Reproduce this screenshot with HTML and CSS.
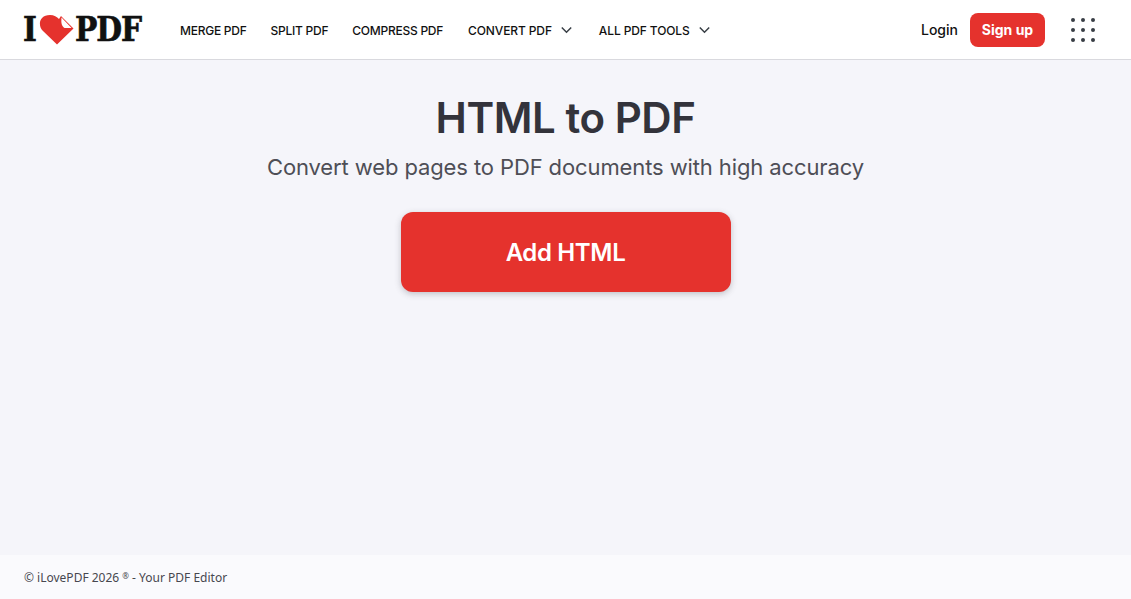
FILE: index.html
```html
<!DOCTYPE html>
<html lang="en">
<head>
  <meta charset="UTF-8">
  <meta name="viewport" content="width=device-width, initial-scale=1.0">
  <title>HTML to PDF</title>
  <link rel="stylesheet" href="styles.css">
</head>
<body>
  <header class="top_bar">
    <a class="logo" href="#">
      <span class="logo_txt logo_i">I</span>
      <svg class="logo_heart" width="36" height="32" viewBox="0 0 36 32">
        <path d="M18 30.500 L4 17 C-1.500 11.500 0 1 11 1 C15 1 18 3 20 5 L22 2 L34.500 14.500 Z" fill="#e5322d"/>
        <path d="M22.500 3.500 L32.500 14 L25.500 14 C22.500 12 22 9 22.500 3.500 Z" fill="#fff"/>
      </svg>
      <span class="logo_txt">PDF</span>
    </a>
    <nav class="main_nav">
      <a href="#">MERGE PDF</a>
      <a href="#">SPLIT PDF</a>
      <a href="#">COMPRESS PDF</a>
      <a href="#" class="has_drop">CONVERT PDF
        <svg width="11" height="8" viewBox="0 0 11 8"><path d="M0.800 1.500 L5.500 6.200 L10.200 1.500" fill="none" stroke="#383e45" stroke-width="1.500"/></svg>
      </a>
      <a href="#" class="has_drop">ALL PDF TOOLS
        <svg width="11" height="8" viewBox="0 0 11 8"><path d="M0.800 1.500 L5.500 6.200 L10.200 1.500" fill="none" stroke="#383e45" stroke-width="1.500"/></svg>
      </a>
    </nav>
    <div class="user_box">
      <a class="login" href="#">Login</a>
      <a class="signup" href="#">Sign up</a>
      <div class="apps_grid">
        <i></i><i></i><i></i><i></i><i></i><i></i><i></i><i></i><i></i>
      </div>
    </div>
  </header>

  <main class="tool_area">
    <h1>HTML to PDF</h1>
    <h2>Convert web pages to PDF documents with high accuracy</h2>
    <a class="add_btn" href="#">Add HTML</a>
  </main>

  <footer class="foot_bar">© iLovePDF 2026 <span class="reg">®</span> - Your PDF Editor</footer>
</body>
</html>
```

FILE: styles.css
```css
* {
  box-sizing: border-box;
}

html, body {
  height: 100%;
}

body {
  margin: 0;
  display: flex;
  flex-direction: column;
  font-family: Inter, 'Liberation Sans', sans-serif;
  background-color: #f5f5fa;
  color: #33333b;
  overflow: hidden;
}

a {
  text-decoration: none;
  color: inherit;
}

.top_bar {
  display: flex;
  align-items: center;
  height: 60px;
  padding: 0 36px 0 24px;
  background-color: #fff;
  border-bottom: 1px solid #d9d9de;
}

.logo {
  display: flex;
  align-items: center;
  width: 120px;
  margin-right: 36px;
}

.logo_txt {
  font-family: 'DejaVu Serif Condensed', 'DejaVu Serif', serif;
  font-weight: 700;
  font-size: 33px;
  line-height: 32px;
  letter-spacing: -1px;
  color: #111;
  -webkit-text-stroke: 0.6px #111;
}

.logo_i {
  margin-left: -1px;
}

.logo_heart {
  margin: 0 0 0 3px;
  flex: none;
}

.main_nav {
  display: flex;
  align-items: center;
  gap: 24px;
  padding-top: 2px;
  font-size: 12px;
  font-weight: 500;
  letter-spacing: -0.25px;
  color: #111;
}

.has_drop {
  display: flex;
  align-items: center;
  gap: 9px;
  margin-left: 1px;
  letter-spacing: -0.12px;
}

.has_drop + .has_drop {
  margin-left: 3px;
}

.has_drop svg {
  margin-bottom: 2px;
}

.user_box {
  display: flex;
  align-items: center;
  margin-left: auto;
}

.login {
  font-size: 14px;
  font-weight: 500;
  color: #111;
}

.signup {
  display: flex;
  align-items: center;
  justify-content: center;
  width: 75px;
  height: 34px;
  margin-left: 12px;
  border-radius: 8px;
  background-color: #e5322d;
  color: #fff;
  font-size: 14px;
  font-weight: 700;
}

.apps_grid {
  display: grid;
  grid-template-columns: repeat(3, 4px);
  gap: 6px;
  margin-left: 26px;
}

.apps_grid i {
  width: 4px;
  height: 4px;
  border-radius: 50%;
  background-color: #383e45;
}

.tool_area {
  flex: 1;
  display: flex;
  flex-direction: column;
  align-items: center;
  padding-top: 31px;
}

h1 {
  margin: 0;
  font-size: 42px;
  line-height: 54px;
  font-weight: 600;
  letter-spacing: -0.45px;
  color: #33333b;
}

h2 {
  margin: 8px 0 0;
  font-size: 22px;
  line-height: 28px;
  font-weight: 400;
  letter-spacing: -0.11px;
  color: #4e4e56;
}

.add_btn {
  display: flex;
  align-items: center;
  justify-content: center;
  width: 330px;
  height: 80px;
  margin-top: 31px;
  border-radius: 12px;
  background-color: #e5322d;
  color: #fff;
  font-size: 24px;
  font-weight: 600;
  letter-spacing: -0.35px;
  box-shadow: 0 2px 6px rgba(72, 72, 84, 0.3);
}

.foot_bar {
  height: 44px;
  padding-left: 24px;
  line-height: 46px;
  font-family: 'Noto Sans', sans-serif;
  font-size: 12px;
  background-color: #fafafd;
  color: #47474f;
}

.reg {
  font-size: 8px;
  line-height: 0;
  vertical-align: 3px;
}
```
